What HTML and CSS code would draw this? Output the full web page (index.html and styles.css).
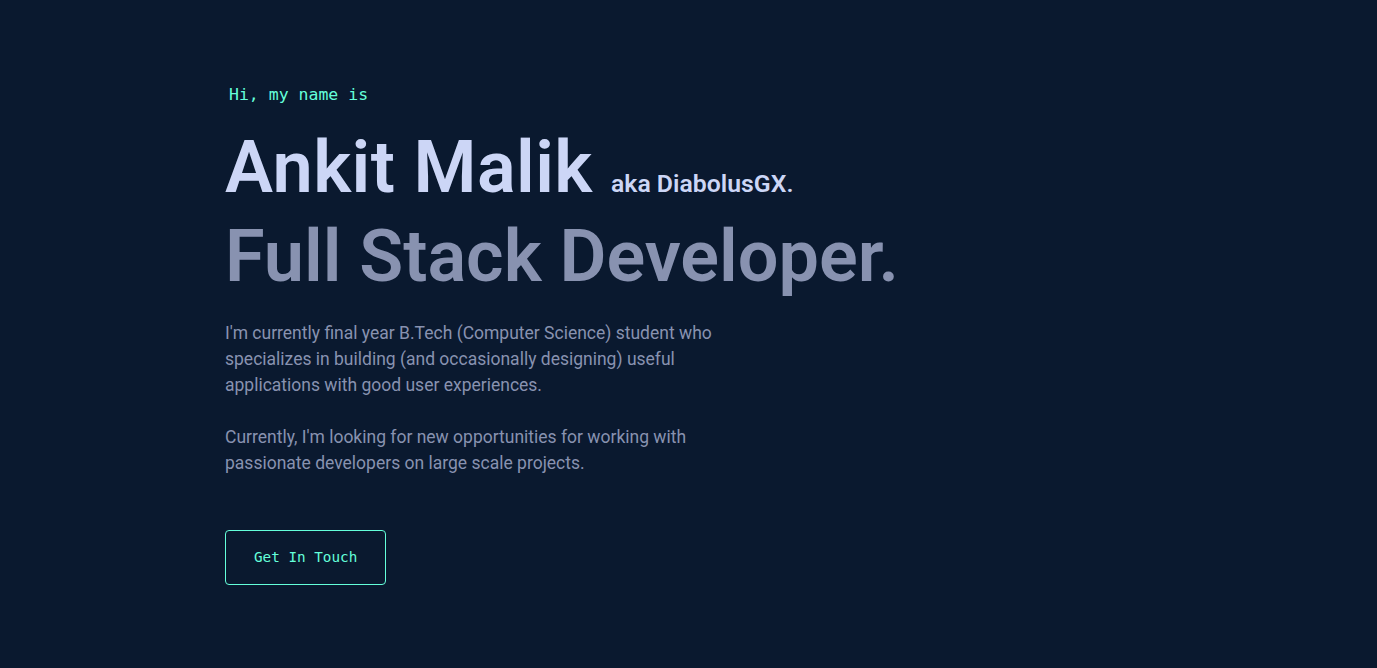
FILE: index.html
```html
<!DOCTYPE html>
<html lang="en">
<head>
<meta charset="utf-8">
<title>Ankit Malik</title>
<link rel="stylesheet" href="styles.css">
</head>
<body>
<main class="page">
  <section class="hero">
    <h1 class="intro">Hi, my name is</h1>
    <h2 class="name">Ankit Malik <span class="aka">aka DiabolusGX.</span></h2>
    <h3 class="role">Full Stack Developer.</h3>
    <div class="about">
      <p>I'm currently final year B.Tech (Computer Science) student who specializes in building (and occasionally designing) useful applications with good user experiences.</p>
      <p>Currently, I'm looking for new opportunities for working with passionate developers on large scale projects.</p>
    </div>
    <a class="cta" href="#contact">Get In Touch</a>
  </section>
</main>
</body>
</html>
```

FILE: styles.css
```css
html, body {
  margin: 0;
  padding: 0;
  background: #0a192f;
}
body {
  font-family: Roboto, "Noto Sans", sans-serif;
  color: #8892b0;
}
.page {
  padding: 0 0 0 225px;
}
.hero {
  box-sizing: border-box;
  min-height: 668px;
  padding-top: 2px;
  display: flex;
  flex-direction: column;
  justify-content: center;
  align-items: flex-start;
}
.intro {
  margin: 0 0 24px 4px;
  font-family: "DejaVu Sans Mono", monospace;
  font-weight: 400;
  font-size: 16.5px;
  color: #64ffda;
}
.name {
  margin: 0;
  font-size: 72px;
  font-weight: 600;
  line-height: 1.1;
  color: #ccd6f6;
  letter-spacing: 0.4px;
}
.aka {
  font-size: 24.8px;
  letter-spacing: 0;
  margin-left: 0;
}
.role {
  margin: 10px 0 0;
  font-size: 72px;
  font-weight: 600;
  line-height: 1.1;
  color: #8892b0;
  letter-spacing: 0;
}
.about {
  margin-top: 24px;
  max-width: 540px;
  font-size: 17.5px;
  line-height: 26px;
}
.about p {
  margin: 0 0 26px;
}
.cta {
  margin-top: 28px;
  display: inline-block;
  padding: 18px 28px 19px;
  border: 1px solid #64ffda;
  border-radius: 4px;
  color: #64ffda;
  font-family: "DejaVu Sans Mono", monospace;
  font-size: 14.3px;
  text-decoration: none;
}
```
